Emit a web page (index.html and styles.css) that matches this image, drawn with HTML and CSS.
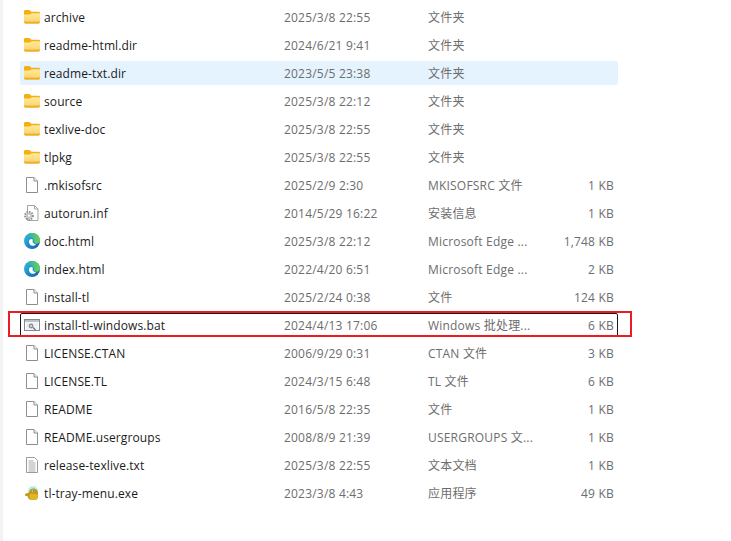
FILE: index.html
```html
<!DOCTYPE html>
<html lang="zh-CN">
<head>
<meta charset="utf-8">
<title>文件列表</title>
<link rel="stylesheet" href="styles.css">
</head>
<body>
<svg class="defs" width="0" height="0" aria-hidden="true">
  <defs>
    <linearGradient id="fold" x1="0" y1="0" x2="0" y2="1"><stop offset="0" stop-color="#ffe9a0"/><stop offset="1" stop-color="#fbd266"/></linearGradient>
    <linearGradient id="edgeA" x1="0" y1="0" x2="1" y2="1"><stop offset="0" stop-color="#35c1f1"/><stop offset="1" stop-color="#0c59a4"/></linearGradient>
    <linearGradient id="edgeB" x1="0" y1="0" x2="1" y2="0"><stop offset="0" stop-color="#1aa8c8"/><stop offset="1" stop-color="#6ad34f"/></linearGradient>
    <symbol id="folder" viewBox="0 0 16 16">
      <path d="M0 2.500C0 1.700.6 1 1.400 1h4l2 1.800h7.200c.8 0 1.400.6 1.400 1.400V13c0 .8-.6 1.400-1.400 1.400H1.400C.6 14.400 0 13.800 0 13Z" fill="#f4b00f"/>
      <path d="M0 5.500 6.200 5.500 7.800 4.200H14.800c.7 0 1.200.5 1.200 1.200V13c0 .8-.6 1.400-1.400 1.400H1.400C.6 14.400 0 13.800 0 13Z" fill="url(#fold)"/>
      <path d="M0 13c0 .8.600 1.400 1.400 1.400h13.200c.8 0 1.400-.6 1.400-1.400v-.6H0Z" fill="#eeb132"/>
    </symbol>
    <symbol id="file" viewBox="0 0 16 16">
      <path d="M2.500.5H10L13.500 4V15.500H2.500Z" fill="#fff" stroke="#8e8e8e"/>
      <path d="M10 .5V4H13.500" fill="#f2f2f2" stroke="#8e8e8e"/>
    </symbol>
    <symbol id="inf" viewBox="0 0 16 16">
      <path d="M3.500.5H10.500L14 4V15.500H3.500Z" fill="#fff" stroke="#a5a5a5"/>
      <path d="M10.500 .5V4H14" fill="none" stroke="#a5a5a5"/>
      <circle cx="5" cy="10.700" r="3.800" fill="none" stroke="#8b8b8b" stroke-width="2" stroke-dasharray="1.500 1"/>
      <circle cx="5" cy="10.700" r="3" fill="#c4c4c4"/>
      <circle cx="5" cy="10.700" r="1.100" fill="#fff"/>
    </symbol>
    <symbol id="edge" viewBox="0 0 16 16">
      <circle cx="8" cy="8" r="8" fill="url(#edgeA)"/>
      <path d="M1 5C2.500 1.500 5.500 0 8 0c4.500 0 8 3.200 8 7.600 0 2-1.600 3.200-3.600 3.200-1.600 0-3.200-.6-3.200-1.500 0-.5.700-.8.700-1.900C9.900 5.700 8 4 6 4 4 4 2.200 4.200 1 5Z" fill="url(#edgeB)"/>
      <path d="M5 8.500C5 6.800 6.200 6 7.600 6c1.200 0 1.400 1 1.100 1.800-.4 1 .2 3 3.300 3.600-1 1-2.400 1.600-3.800 1.400C6 12.400 5 10.600 5 8.500Z" fill="#fff"/>
    </symbol>
    <symbol id="bat" viewBox="0 0 16 16">
      <rect x=".5" y="2.500" width="15" height="11" fill="#fff" stroke="#7f8a94"/>
      <rect x="1" y="3" width="14" height="2" fill="#b9c2ca"/>
      <rect x="2" y="5.500" width="12" height="7" fill="#eef0f2"/>
      <circle cx="7" cy="9" r="2.400" fill="#8a8f94"/>
      <circle cx="7" cy="9" r=".9" fill="#eef0f2"/>
      <path d="M9 10.500 11.500 13" stroke="#707070" stroke-width="1.300"/>
    </symbol>
    <symbol id="txt" viewBox="0 0 16 16">
      <path d="M2.500.5H10.500L13.500 3.500V15.500H2.500Z" fill="#fff" stroke="#9a9a9a"/>
      <path d="M4.500 4H9.500M4.500 6H11.500M4.500 8H11.500M4.500 10H11.500M4.500 12H11.500M4.500 14H11.500" stroke="#a8a8a8"/>
    </symbol>
    <symbol id="exe" viewBox="0 0 16 16">
      <circle cx="9" cy="6" r="5" fill="#b5efe6"/>
      <path d="M1 9 5 7.500C5.500 4.500 7.500 3 10 3.500c2.500.5 4 2 4 4.500v3.500c0 2-1.500 3.500-3.500 3.500H7.500C5.500 15 4 13.500 3.800 11.500L1 10.500Z" fill="#c09a1c"/>
      <path d="M5.500 9c2.500-.5 6-.5 8.500.5v2c0 2-1.500 3.500-3.500 3.500H7.500C6 15 5.500 13 5.500 11.500Z" fill="#e0b422"/>
      <circle cx="9.500" cy="6" r="1.200" fill="#f4f0d0"/>
      <circle cx="9.800" cy="6" r=".7" fill="#222"/>
    </symbol>
  </defs>
</svg>
<main class="list">
  <div class="row"><svg class="icon"><use href="#folder"/></svg><span class="name">archive</span><span class="date">2025/3/8 22:55</span><span class="type">文件夹</span><span class="size"></span></div>
  <div class="row"><svg class="icon"><use href="#folder"/></svg><span class="name">readme-html.dir</span><span class="date">2024/6/21 9:41</span><span class="type">文件夹</span><span class="size"></span></div>
  <div class="row hover"><svg class="icon"><use href="#folder"/></svg><span class="name">readme-txt.dir</span><span class="date">2023/5/5 23:38</span><span class="type">文件夹</span><span class="size"></span></div>
  <div class="row"><svg class="icon"><use href="#folder"/></svg><span class="name">source</span><span class="date">2025/3/8 22:12</span><span class="type">文件夹</span><span class="size"></span></div>
  <div class="row"><svg class="icon"><use href="#folder"/></svg><span class="name">texlive-doc</span><span class="date">2025/3/8 22:55</span><span class="type">文件夹</span><span class="size"></span></div>
  <div class="row"><svg class="icon"><use href="#folder"/></svg><span class="name">tlpkg</span><span class="date">2025/3/8 22:55</span><span class="type">文件夹</span><span class="size"></span></div>
  <div class="row"><svg class="icon"><use href="#file"/></svg><span class="name">.mkisofsrc</span><span class="date">2025/2/9 2:30</span><span class="type">MKISOFSRC 文件</span><span class="size">1 KB</span></div>
  <div class="row"><svg class="icon"><use href="#inf"/></svg><span class="name">autorun.inf</span><span class="date">2014/5/29 16:22</span><span class="type">安装信息</span><span class="size">1 KB</span></div>
  <div class="row"><svg class="icon"><use href="#edge"/></svg><span class="name">doc.html</span><span class="date">2025/3/8 22:12</span><span class="type">Microsoft Edge ...</span><span class="size">1,748 KB</span></div>
  <div class="row"><svg class="icon"><use href="#edge"/></svg><span class="name">index.html</span><span class="date">2022/4/20 6:51</span><span class="type">Microsoft Edge ...</span><span class="size">2 KB</span></div>
  <div class="row"><svg class="icon"><use href="#file"/></svg><span class="name">install-tl</span><span class="date">2025/2/24 0:38</span><span class="type">文件</span><span class="size">124 KB</span></div>
  <div class="row focus"><svg class="icon"><use href="#bat"/></svg><span class="name">install-tl-windows.bat</span><span class="date">2024/4/13 17:06</span><span class="type">Windows 批处理...</span><span class="size">6 KB</span><span class="mark"></span></div>
  <div class="row"><svg class="icon"><use href="#file"/></svg><span class="name">LICENSE.CTAN</span><span class="date">2006/9/29 0:31</span><span class="type">CTAN 文件</span><span class="size">3 KB</span></div>
  <div class="row"><svg class="icon"><use href="#file"/></svg><span class="name">LICENSE.TL</span><span class="date">2024/3/15 6:48</span><span class="type">TL 文件</span><span class="size">6 KB</span></div>
  <div class="row"><svg class="icon"><use href="#file"/></svg><span class="name">README</span><span class="date">2016/5/8 22:35</span><span class="type">文件</span><span class="size">1 KB</span></div>
  <div class="row"><svg class="icon"><use href="#file"/></svg><span class="name">README.usergroups</span><span class="date">2008/8/9 21:39</span><span class="type">USERGROUPS 文...</span><span class="size">1 KB</span></div>
  <div class="row"><svg class="icon"><use href="#txt"/></svg><span class="name">release-texlive.txt</span><span class="date">2025/3/8 22:55</span><span class="type">文本文档</span><span class="size">1 KB</span></div>
  <div class="row"><svg class="icon"><use href="#exe"/></svg><span class="name">tl-tray-menu.exe</span><span class="date">2023/3/8 4:43</span><span class="type">应用程序</span><span class="size">49 KB</span></div>
</main>
</body>
</html>
```
FILE: styles.css
```css
html, body {
  margin: 0;
  height: 100%;
  background: #fff;
  overflow: hidden;
}
body {
  font-family: "Open Sans", "Noto Sans CJK SC", sans-serif;
  font-size: 12px;
  color: #1b1b1b;
  border-left: 3px solid #f3f3f3;
  box-sizing: border-box;
}
.defs {
  position: absolute;
}
.list {
  display: flex;
  flex-direction: column;
  gap: 4px;
  width: 598px;
  margin-left: 17px;
  padding-top: 5px;
}
.row {
  position: relative;
  display: grid;
  grid-template-columns: 16px 244px 144px 130px 56px;
  align-items: center;
  height: 24px;
  padding-left: 4px;
  border-radius: 2px;
  white-space: nowrap;
  box-sizing: border-box;
}
.icon {
  width: 16px;
  height: 16px;
}
.name {
  padding-left: 4px;
  letter-spacing: 0.1px;
}
.date, .type, .size {
  color: #6d6d6d;
  letter-spacing: 0.2px;
}
.size {
  text-align: right;
}
.hover {
  background: #e5f3ff;
}
.focus {
  outline: 1px solid #1a1a1a;
  outline-offset: -1px;
}
.mark {
  position: absolute;
  left: -12px;
  top: -2px;
  width: 624px;
  height: 26px;
  border: 2px solid #ed1c24;
  box-sizing: border-box;
}
```
